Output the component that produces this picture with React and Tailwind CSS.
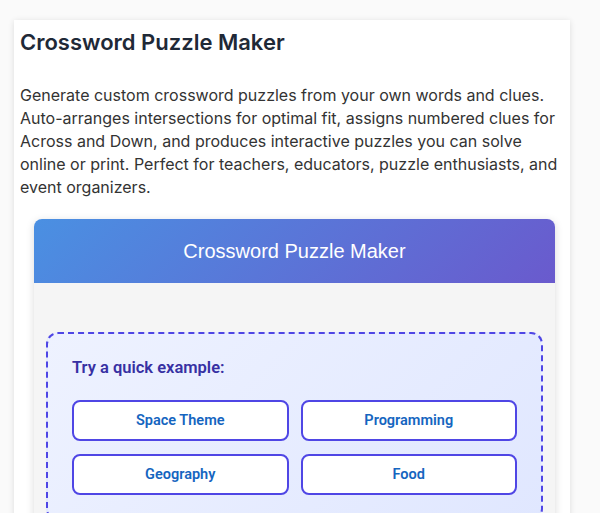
export default function App() {
  const examples = ["Space Theme", "Programming", "Geography", "Food"];
  return (
    <div className="h-screen overflow-y-scroll bg-[#fafafa] font-['Inter',sans-serif] [&::-webkit-scrollbar]:w-[15px] [&::-webkit-scrollbar-track]:bg-[#fafafa] [&::-webkit-scrollbar-thumb]:rounded-full [&::-webkit-scrollbar-thumb]:bg-[#8c8c8c] [&::-webkit-scrollbar-thumb]:border-[3px] [&::-webkit-scrollbar-thumb]:border-solid [&::-webkit-scrollbar-thumb]:border-transparent [&::-webkit-scrollbar-thumb]:bg-clip-padding [&::-webkit-scrollbar-button:single-button]:block [&::-webkit-scrollbar-button:single-button]:h-[17px] [&::-webkit-scrollbar-button:single-button]:bg-transparent">
      <div className="pt-[20px] pb-10">
        <div className="ml-[14px] w-[556px] bg-white shadow-[0_1px_6px_rgba(0,0,0,0.12)] px-[6px] pt-[8px] pb-6">
          <h1 className="text-[22px] font-semibold leading-7 text-[#1f2937]">Crossword Puzzle Maker</h1>
          <p className="mt-[28px] text-[16px] leading-[23px] text-[#333333]">
            Generate custom crossword puzzles from your own words and clues. Auto-arranges intersections for optimal fit, assigns numbered clues for Across and Down, and produces interactive puzzles you can solve online or print. Perfect for teachers, educators, puzzle enthusiasts, and event organizers.
          </p>
          <div className="ml-[14px] mt-[20px] w-[521px] rounded-t-lg overflow-hidden shadow-[0_2px_8px_rgba(0,0,0,0.15)]">
            <div className="h-16 flex items-center justify-center bg-[linear-gradient(135deg,#4a90e2,#6a5acd)]">
              <span className="font-['Liberation_Sans',Arial,sans-serif] text-[20px] text-white">Crossword Puzzle Maker</span>
            </div>
            <div className="bg-[#f5f5f5] px-3 pt-[49px] pb-6 min-h-[6600px]">
              <div className="rounded-xl border-2 border-dashed border-[#4f46e5] bg-[linear-gradient(135deg,#eef2ff,#e0e7ff)] p-6 font-['Roboto',sans-serif]">
                <div className="text-[16.5px] leading-5 font-semibold text-[#3730a3]">Try a quick example:</div>
                <div className="mt-[22px] grid grid-cols-2 gap-x-3 gap-y-[13px]">
                  {examples.map((e) => (
                    <button
                      key={e}
                      className="h-[41px] rounded-lg border-2 border-[#4f46e5] bg-white text-[14.5px] font-semibold text-[#1565c0]"
                    >
                      {e}
                    </button>
                  ))}
                </div>
              </div>
            </div>
          </div>
        </div>
      </div>
    </div>
  );
}
